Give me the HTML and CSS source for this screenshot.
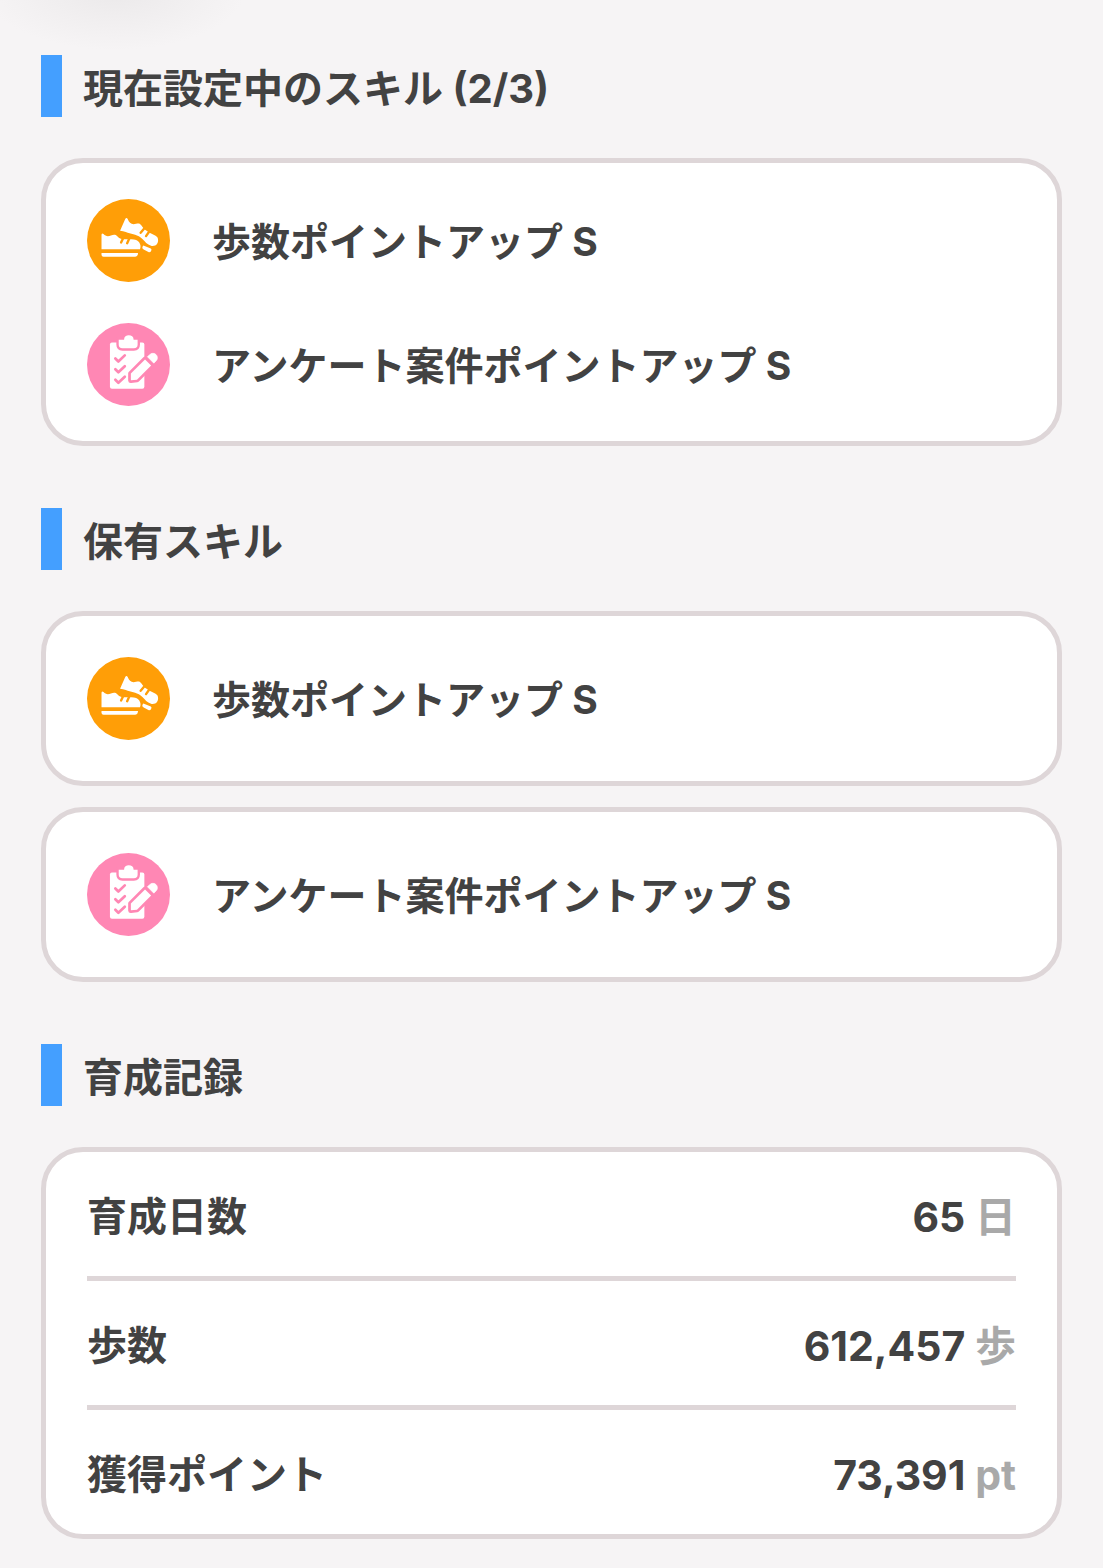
FILE: index.html
```html
<!DOCTYPE html>
<html lang="ja">
<head>
<meta charset="utf-8">
<meta name="viewport" content="width=device-width, initial-scale=1">
<title>スキルと育成記録</title>
<link rel="stylesheet" href="styles.css">
</head>
<body>
<svg class="sprite" aria-hidden="true">
  <symbol id="icon-shoes" viewBox="24 27 246 246">
    <circle cx="147" cy="150" r="123" fill="#ff9e07"/>
    <path d="M67 134q0-8 6-3c6 7 14 8 22 4 8-3 14-3 18 2 6 7 12 9 20 9h22c12 0 19 3 24 10 4 7 5 13 2 20h-114z" fill="#fff"/>
    <path d="M67 187h108v3q-1 8-8 8H73q-6 0-6-6z" fill="#fff"/>
    <path d="M131 143l-6 13M149 145l-6 13" fill="none" stroke="#ff9e07" stroke-width="7" stroke-linecap="round"/>
    <path d="M137 87q4-7 8 0c3 9 9 14 17 15 7 0 13-4 19-1 6 4 8 12 15 17l15 10c8 5 17 6 22 13 4 9 1 20-7 24-7 3-14 1-20-3-10-6-14-15-23-21-14-10-29-10-44-16-5-2-11-3-17-4z" fill="#fff"/>
    <path d="M193 115l-10 12M208 124l-9 13" fill="none" stroke="#ff9e07" stroke-width="7" stroke-linecap="round"/>
    <path d="M191 165l22 9q4 2 1 7t-8 3l-14-7q-5-3-4-8z" fill="#fff"/>
  </symbol>
  <symbol id="icon-survey" viewBox="24 24 246 246">
    <circle cx="147" cy="147" r="123" fill="#ff87b4"/>
    <rect x="92" y="82" width="102" height="137" rx="6" fill="#fff"/>
    <path d="M118 74h16v-2a14 12 0 0 1 28 0v2h12v14q0 11-11 11h-34q-11 0-11-11z" fill="#fff" stroke="#ff87b4" stroke-width="14" paint-order="stroke"/>
    <path d="M108 129l9 9 19-18M108 161l9 9 19-18M108 192l9 9 19-18" fill="none" stroke="#ff87b4" stroke-width="8" stroke-linecap="round" stroke-linejoin="round"/>
    <path d="M154 174l42-42 18 18-42 42-18 2z" fill="#fff" stroke="#ff87b4" stroke-width="16" stroke-linejoin="round" paint-order="stroke"/>
    <path d="M203 124l7-6a13 13 0 0 1 19 18l-7 7z" fill="#fff" stroke="#fff" stroke-width="2" stroke-linejoin="round"/>
  </symbol>
</svg>

<main class="page">
  <section class="section">
    <h2 class="heading">現在設定中のスキル (2/3)</h2>
    <ul class="card card-active">
      <li class="skill"><svg class="skill-icon" aria-hidden="true"><use href="#icon-shoes"/></svg><span class="skill-name">歩数ポイントアップ S</span></li>
      <li class="skill"><svg class="skill-icon" aria-hidden="true"><use href="#icon-survey"/></svg><span class="skill-name">アンケート案件ポイントアップ S</span></li>
    </ul>
  </section>

  <section class="section">
    <h2 class="heading">保有スキル</h2>
    <ul class="owned">
      <li class="card skill"><svg class="skill-icon" aria-hidden="true"><use href="#icon-shoes"/></svg><span class="skill-name">歩数ポイントアップ S</span></li>
      <li class="card skill"><svg class="skill-icon" aria-hidden="true"><use href="#icon-survey"/></svg><span class="skill-name">アンケート案件ポイントアップ S</span></li>
    </ul>
  </section>

  <section class="section">
    <h2 class="heading">育成記録</h2>
    <dl class="card records">
      <div class="record"><dt>育成日数</dt><dd>65 <span class="unit">日</span></dd></div>
      <div class="record"><dt>歩数</dt><dd>612,457 <span class="unit">歩</span></dd></div>
      <div class="record"><dt>獲得ポイント</dt><dd>73,391 <span class="unit">pt</span></dd></div>
    </dl>
  </section>
</main>
</body>
</html>
```
FILE: styles.css
```css
* {
  box-sizing: border-box;
  margin: 0;
  padding: 0;
}

body {
  background: radial-gradient(ellipse 130px 60px at 115px -10px, #ebe9ea, #f6f4f5) no-repeat #f6f4f5;
  color: #424242;
  font: 700 40px/56px Inter, "Noto Sans CJK JP", sans-serif;
}

ul {
  list-style: none;
}

.sprite {
  display: none;
}

.page {
  display: flex;
  flex-direction: column;
  gap: 62px;
  padding: 55px 41px 30px;
}

.section {
  display: flex;
  flex-direction: column;
  gap: 41px;
}

.heading {
  border-left: 21px solid #449fff;
  padding: 6px 0 0 21px;
  font-size: 40px;
}

.card {
  background: #fff;
  border: 5px solid #ded6d8;
  border-radius: 42px;
  padding: 41px;
}

.card-active {
  display: flex;
  flex-direction: column;
  gap: 41px;
  padding-block: 36px 35px;
}

.skill {
  display: flex;
  align-items: center;
  gap: 42px;
}

.skill-icon {
  flex: none;
  width: 83px;
  height: 83px;
}

.skill-name {
  padding-top: 3px;
  font-size: 39px;
}

.owned {
  display: flex;
  flex-direction: column;
  gap: 21px;
}

.records {
  padding-block: 0;
}

.record {
  display: flex;
  align-items: center;
  justify-content: space-between;
  min-height: 124px;
  padding-top: 5px;
}

.record + .record {
  border-top: 5px solid #ded6d8;
  min-height: 129px;
}

dd {
  font-size: 41px;
}

.unit {
  color: #a9a9a9;
}
```
